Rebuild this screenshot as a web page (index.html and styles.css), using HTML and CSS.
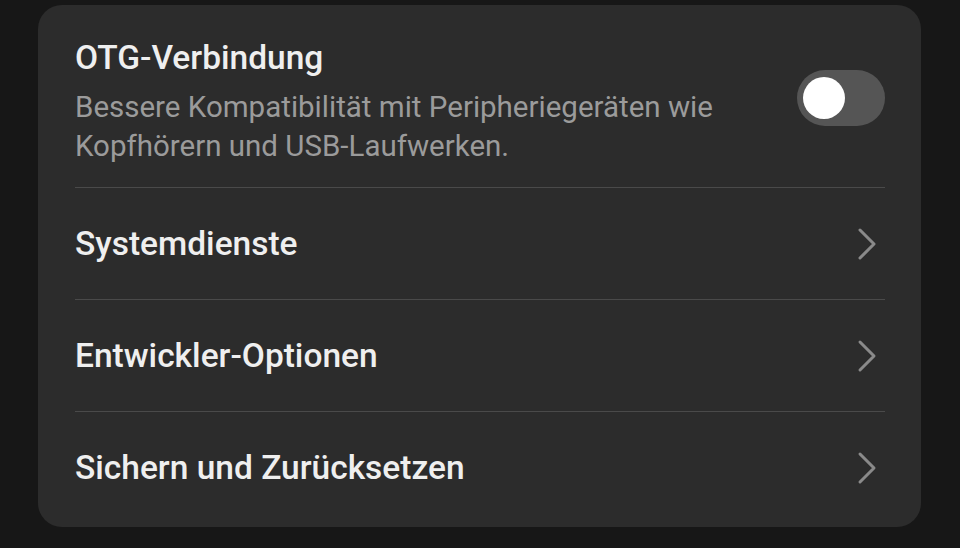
FILE: index.html
```html
<!DOCTYPE html>
<html lang="de">
<head>
    <meta charset="UTF-8">
    <meta name="viewport" content="width=device-width, initial-scale=1.0">
    <title>Einstellungen</title>
    <link rel="stylesheet" href="styles.css">
</head>
<body>
    <div class="card">
        <div class="item item-otg">
            <div class="item-text">
                <div class="item-title">OTG-Verbindung</div>
                <div class="item-desc">Bessere Kompatibilität mit Peripheriegeräten wie Kopfhörern und USB-Laufwerken.</div>
            </div>
            <div class="switch"><span class="knob"></span></div>
        </div>

        <div class="item item-link">
            <div class="item-title">Systemdienste</div>
            <svg class="chevron" width="22" height="34" viewBox="0 0 22 34"><path d="M3 3 L17 17 L3 31" /></svg>
        </div>

        <div class="item item-link">
            <div class="item-title">Entwickler-Optionen</div>
            <svg class="chevron" width="22" height="34" viewBox="0 0 22 34"><path d="M3 3 L17 17 L3 31" /></svg>
        </div>

        <div class="item item-link">
            <div class="item-title">Sichern und Zurücksetzen</div>
            <svg class="chevron" width="22" height="34" viewBox="0 0 22 34"><path d="M3 3 L17 17 L3 31" /></svg>
        </div>
    </div>
</body>
</html>
```

FILE: styles.css
```css
body {
    margin: 0;
    padding: 5px 39px 0 38px;
    background-color: #171717;
    font-family: Roboto, "Noto Sans", sans-serif;
    height: 548px;
    box-sizing: border-box;
    overflow: hidden;
}

.card {
    background-color: #2c2c2c;
    border-radius: 24px;
    padding: 0 36px 0 37px;
    height: 522px;
}

.item {
    display: flex;
    align-items: center;
    justify-content: space-between;
    border-bottom: 1px solid #4a4a4a;
}

.item:last-child {
    border-bottom: none;
}

.item-otg {
    align-items: flex-start;
    height: 183px;
    box-sizing: border-box;
}

.item-otg .item-text {
    padding-top: 33px;
    width: 700px;
}

.item-link {
    height: 111px;
}

.item-title {
    font-size: 33.5px;
    font-weight: 500;
    color: #efefef;
    line-height: 40px;
}

.item-desc {
    font-size: 29.5px;
    color: #9b9b9b;
    line-height: 39px;
    margin-top: 10px;
}

.switch {
    width: 88px;
    height: 56px;
    margin-top: 65px;
    border-radius: 28px;
    background-color: #555555;
    display: flex;
    align-items: center;
    padding-left: 6px;
    box-sizing: border-box;
}

.knob {
    width: 42px;
    height: 42px;
    border-radius: 50%;
    background-color: #fff;
}

.chevron {
    margin-right: 6px;
}

.chevron path {
    fill: none;
    stroke: #8a8a8a;
    stroke-width: 3;
    stroke-linecap: round;
    stroke-linejoin: round;
}
```
